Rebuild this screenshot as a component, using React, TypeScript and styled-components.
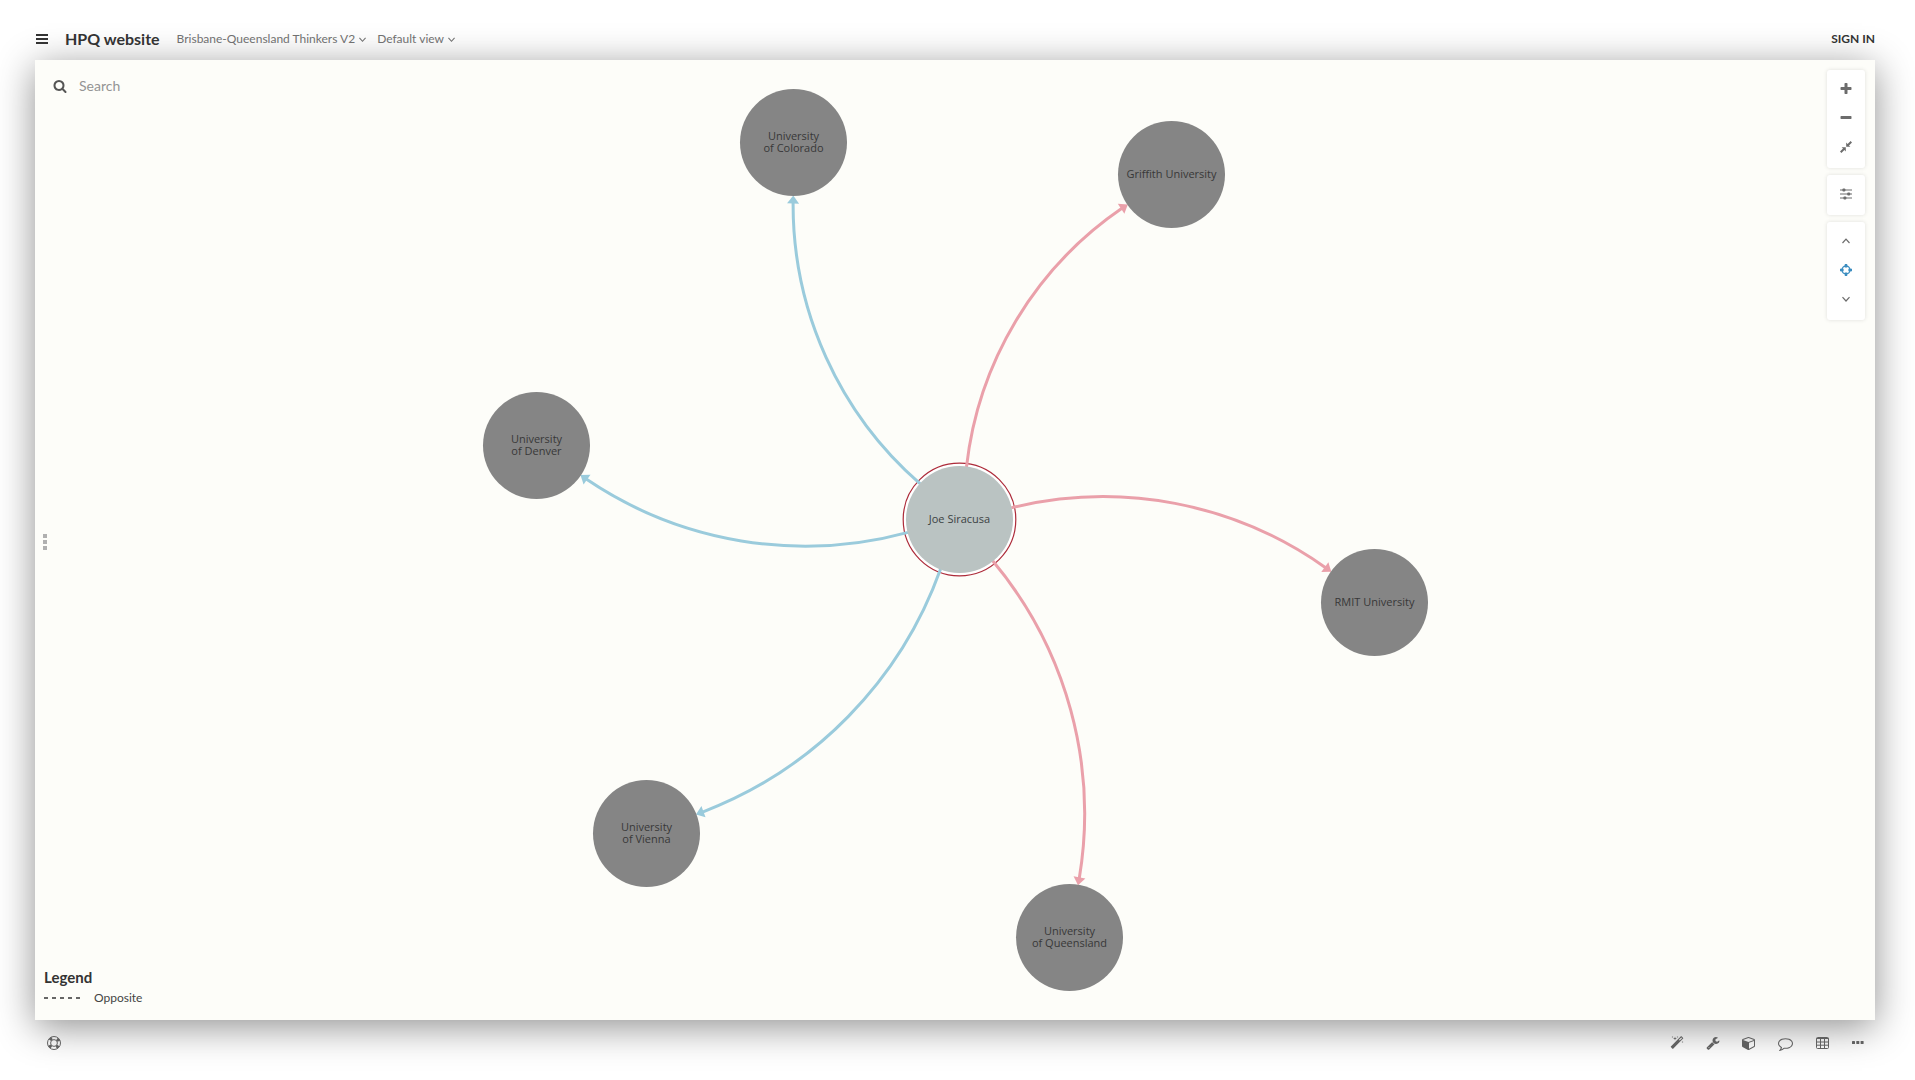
import React from 'react';
import styled, { createGlobalStyle } from 'styled-components';

const GlobalStyle = createGlobalStyle`
  *, *::before, *::after { box-sizing: border-box; }
  body {
    margin: 0;
    background: #fff;
    color: #333;
    font-family: Lato, "Liberation Sans", sans-serif;
  }
  button, input { font: inherit; color: inherit; }
`;

const Page = styled.div`
  display: grid;
  grid-template-rows: 60px 1fr 60px;
  min-height: 100vh;
  padding: 0 40px 0 35px;
`;

const TopBar = styled.header`
  position: relative;
  z-index: 2;
  display: flex;
  align-items: center;
  padding: 18px 0 0 1px;
`;

const PlainButton = styled.button`
  display: inline-flex;
  align-items: center;
  justify-content: center;
  margin: 0;
  padding: 0;
  border: 0;
  background: none;
  cursor: pointer;
`;

const Title = styled.h1`
  margin: 0 17px;
  font-size: 16px;
  line-height: 20px;
  font-weight: 700;
`;

const Picker = styled(PlainButton)`
  gap: 4px;
  margin-right: 11px;
  font-size: 12px;
  line-height: 16px;
  color: #707070;
`;

const SignIn = styled.a`
  margin-left: auto;
  font-size: 12px;
  line-height: 16px;
  font-weight: 700;
  color: #333;
  text-decoration: none;
`;

const MapPanel = styled.main`
  position: relative;
  z-index: 1;
  display: flex;
  flex-direction: column;
  justify-content: space-between;
  background: #fdfdf9;
  box-shadow: 0 7px 36px rgba(0, 0, 0, 0.44);
`;

const SearchBox = styled.label`
  position: relative;
  display: flex;
  align-items: center;
  gap: 12px;
  width: 300px;
  padding: 16px 0 0 18px;
  color: #555;
`;

const SearchInput = styled.input`
  width: 200px;
  height: 20px;
  padding: 0;
  border: 0;
  outline: 0;
  background: transparent;
  font-size: 14px;
  line-height: 20px;
  &::placeholder { color: #949494; opacity: 1; }
`;

const Graph = styled.div`
  position: absolute;
  inset: 0;
  overflow: hidden;
`;

const Edges = styled.svg`
  position: absolute;
  left: 50%;
  top: 50%;
  width: 1px;
  height: 1px;
  overflow: visible;
`;

const Node = styled.button<{ $x: number; $y: number; $selected?: boolean }>`
  position: absolute;
  left: calc(50% + ${(p) => p.$x - 53}px);
  top: calc(50% + ${(p) => p.$y - 53}px);
  display: flex;
  align-items: center;
  justify-content: center;
  width: 107px;
  height: 107px;
  padding: 0 0 1px;
  border: 0;
  border-radius: 50%;
  background: ${(p) => (p.$selected ? '#bac3c2' : '#858585')};
  color: ${(p) => (p.$selected ? '#3c4242' : '#383838')};
  font-family: "Open Sans", "Liberation Sans", sans-serif;
  font-size: 11px;
  line-height: 12px;
  text-align: center;
  white-space: pre-line;
  cursor: pointer;
`;

const Controls = styled.div`
  position: absolute;
  top: 10px;
  right: 10px;
  display: grid;
  gap: 7px;
`;

const ControlGroup = styled.div`
  display: flex;
  flex-direction: column;
  width: 38px;
  padding: 4px 0 7px;
  border-radius: 3px;
  background: #fff;
  box-shadow: 0 0 4px rgba(0, 0, 0, 0.12);
`;

const ControlButton = styled(PlainButton)<{ $active?: boolean }>`
  height: 29px;
  color: ${(p) => (p.$active ? '#3b8dc0' : '#6c6c6c')};
`;

const DragHandle = styled(PlainButton)`
  position: absolute;
  left: 8px;
  top: 50%;
  transform: translateY(-50%);
  flex-direction: column;
  gap: 2px;
  padding-top: 4px;
  span { width: 4px; height: 4px; background: #b0b0b0; }
`;

const Legend = styled.section`
  position: relative;
  padding: 0 0 14px 9px;
`;

const LegendTitle = styled.h2`
  margin: 0 0 4px;
  font-size: 15px;
  line-height: 18px;
  font-weight: 700;
`;

const LegendRow = styled.div`
  display: flex;
  align-items: center;
  gap: 14px;
  font-size: 12px;
  line-height: 16px;
  color: #444;
`;

const BottomBar = styled.footer`
  position: relative;
  z-index: 2;
  display: flex;
  align-items: center;
  justify-content: space-between;
  padding: 0 11px 14px 12px;
`;

const Tools = styled.nav`
  display: flex;
  gap: 22px;
`;

const ToolButton = styled(PlainButton)`
  height: 20px;
  color: #606060;
`;

const glyphs = {
  search:
    'M1216 832q0-185-131.5-316.5t-316.5-131.5-316.5 131.5-131.5 316.5 131.5 316.5 316.5 131.5 316.5-131.5 131.5-316.5zm512 832q0 52-38 90t-90 38q-54 0-90-38l-343-342q-179 124-399 124-143 0-273.5-55.5t-225-150-150-225-55.5-273.5 55.5-273.5 150-225 225-150 273.5-55.5 273.5 55.5 225 150 150 225 55.5 273.5q0 220-124 399l343 343q37 37 37 90z',
  plus: 'M1600 736v192q0 40-28 68t-68 28h-416v416q0 40-28 68t-68 28h-192q-40 0-68-28t-28-68v-416h-416q-40 0-68-28t-28-68v-192q0-40 28-68t68-28h416v-416q0-40 28-68t68-28h192q40 0 68 28t28 68v416h416q40 0 68 28t28 68z',
  minus: 'M1600 736v192q0 40-28 68t-68 28h-1216q-40 0-68-28t-28-68v-192q0-40 28-68t68-28h1216q40 0 68 28t28 68z',
  magic:
    'M1254 581l293-293-107-107-293 293zm447-293q0 27-18 45l-1286 1286q-18 18-45 18t-45-18l-198-198q-18-18-18-45t18-45l1286-1286q18-18 45-18t45 18l198 198q18 18 18 45zm-1351-190l98 30-98 30-30 98-30-98-98-30 98-30 30-98zm350 162l196 60-196 60-60 196-60-196-196-60 196-60 60-196zm930 478l98 30-98 30-30 98-30-98-98-30 98-30 30-98zm-640-640l98 30-98 30-30 98-30-98-98-30 98-30 30-98z',
  wrench:
    'M448 1472q0-26-19-45t-45-19-45 19-19 45 19 45 45 19 45-19 19-45zm644-420l-682 682q-37 37-90 37-52 0-91-37l-106-108q-38-36-38-90 0-53 38-91l681-681q39 98 114.5 173.5t173.5 114.5zm634-435q0 39-23 106-47 134-164.5 217.5t-258.5 83.5q-185 0-316.5-131.5t-131.5-316.5 131.5-316.5 316.5-131.5q58 0 121.5 16.5t107.5 46.5q16 11 16 28t-16 28l-293 169v224l193 107q5-3 79-48.5t135.5-81 70.5-35.5q15 0 23.5 10t8.5 25z',
  cube: 'M896 1629l640-349v-636l-640 233v752zm-64-865l698-254-698-254-698 254zm832-252v768q0 35-18 65t-49 47l-704 384q-28 16-61 16t-61-16l-704-384q-31-17-49-47t-18-65v-768q0-40 23-73t61-47l704-256q22-8 44-8t44 8l704 256q38 14 61 47t23 73z',
  comment:
    'M896 384q-204 0-381.5 69.5t-282 187.5-104.5 255q0 112 71.5 213.5t201.5 175.5l87 50-27 96q-24 91-70 172 152-63 275-171l43-38 57 6q69 8 130 8 204 0 381.5-69.5t282-187.5 104.5-255-104.5-255-282-187.5-381.5-69.5zm896 512q0 174-120 321.5t-326 233-450 85.5q-70 0-145-8-198 175-460 242-49 14-114 22h-5q-15 0-27-10.5t-16-27.5v-1q-3-4-.5-12t2-10 4.5-9.5l6-9 7-8.5 8-9q7-8 31-34.5t34.5-38 31-39.5 32.5-51 27-59 26-76q-157-89-247.5-220t-90.5-281q0-174 120-321.5t326-233 450-85.5 450 85.5 326 233 120 321.5z',
};

const Glyph = ({ name, size = 14 }: { name: keyof typeof glyphs; size?: number }) => (
  <svg width={size} height={size} viewBox="0 0 1792 1792" fill="currentColor" aria-hidden="true">
    <path d={glyphs[name]} />
  </svg>
);

const Chevron = ({ up, size = 7 }: { up?: boolean; size?: number }) => (
  <svg width={size} height={size} viewBox="0 0 8 8" fill="none" stroke="currentColor" strokeWidth="1.2" aria-hidden="true">
    <path d={up ? 'M.5 6L4 2.2 7.5 6' : 'M.5 2.2L4 6 7.5 2.2'} />
  </svg>
);

const BarsIcon = () => (
  <svg width="12" height="12" viewBox="0 0 12 12" fill="currentColor" aria-hidden="true">
    <path d="M0 1h12v2H0zM0 5h12v2H0zM0 9h12v2H0z" />
  </svg>
);

const CompressIcon = () => (
  <svg width="12" height="12" viewBox="0 0 12 12" fill="currentColor" aria-hidden="true">
    <path d="M6.2 1.6v4.2h4.2L9 4.4 12 1.4 10.6 0 7.6 3zM5.8 10.4V6.2H1.6L3 7.6l-3 3L1.4 12l3-3z" />
  </svg>
);

const SlidersIcon = () => (
  <svg width="12" height="12" viewBox="0 0 12 12" fill="currentColor" aria-hidden="true">
    <path d="M0 1.4h12v1.2H0zM0 5.4h12v1.2H0zM0 9.4h12v1.2H0z" />
    <rect x="2.4" y=".5" width="3" height="3" rx="1" />
    <rect x="7.2" y="4.5" width="3" height="3" rx="1" />
    <rect x="3.4" y="8.5" width="3" height="3" rx="1" />
  </svg>
);

const FocusIcon = () => (
  <svg width="12" height="12" viewBox="0 0 12 12" fill="none" stroke="currentColor" aria-hidden="true">
    <circle cx="6" cy="6" r="4" strokeWidth="1.4" />
    <path d="M6 0v3.6M6 8.4V12M0 6h3.6M8.4 6H12" strokeWidth="2.4" />
  </svg>
);

const TableIcon = () => (
  <svg width="15" height="12" viewBox="0 0 15 12" fill="none" stroke="currentColor" aria-hidden="true">
    <rect x="1.5" y=".5" width="12" height="11" rx="1" />
    <path d="M1.5 1.5h12M1.5 5h12M1.5 8.2h12M5.5 2v9.5M9.5 2v9.5" />
  </svg>
);

const EllipsisIcon = () => (
  <svg width="12" height="12" viewBox="0 0 12 12" fill="currentColor" aria-hidden="true">
    <rect x="0" y="4" width="3" height="3" rx=".6" />
    <rect x="4.3" y="4" width="3" height="3" rx=".6" />
    <rect x="8.6" y="4" width="3" height="3" rx=".6" />
  </svg>
);

const LifeRingIcon = () => (
  <svg width="14" height="14" viewBox="0 0 14 14" fill="none" stroke="currentColor" aria-hidden="true">
    <circle cx="7" cy="7" r="6.5" />
    <circle cx="7" cy="7" r="3.4" />
    <circle cx="7" cy="7" r="5" strokeWidth="3" strokeDasharray="2.8 5.05" strokeDashoffset="-2.55" />
  </svg>
);

const BLUE = '#9acbdc';
const PINK = '#eaa0aa';
const RADIUS = 53;
const ARROW = 7;
const SPREAD = (24 * Math.PI) / 180;
const BEND = (25.2 * Math.PI) / 180;

const hub = { label: 'Joe Siracusa', x: 4, y: -21 };

const places = [
  { label: 'University\nof Colorado', x: -162, y: -398, color: BLUE },
  { label: 'Griffith University', x: 216, y: -366, color: PINK },
  { label: 'RMIT University', x: 419, y: 62, color: PINK },
  { label: 'University\nof Queensland', x: 114, y: 397, color: PINK },
  { label: 'University\nof Vienna', x: -309, y: 293, color: BLUE },
  { label: 'University\nof Denver', x: -419, y: -95, color: BLUE },
];

type Place = (typeof places)[number];

const polar = (cx: number, cy: number, distance: number, angle: number) => ({
  x: cx + distance * Math.cos(angle),
  y: cy + distance * Math.sin(angle),
});

/* Each edge is a circular arc from the hub's rim to the rim of the other node. */
const Edge = ({ place }: { place: Place }) => {
  const heading = Math.atan2(place.y - hub.y, place.x - hub.x);
  const start = polar(hub.x, hub.y, RADIUS, heading - SPREAD);
  const tip = polar(place.x, place.y, RADIUS, heading + Math.PI + SPREAD);
  const chord = Math.hypot(tip.x - start.x, tip.y - start.y);
  const arc = chord / (2 * Math.sin(BEND));
  const direction = heading + BEND;
  const end = polar(tip.x, tip.y, -ARROW, direction);
  return (
    <g>
      <path
        d={`M${start.x} ${start.y}A${arc} ${arc} 0 0 1 ${end.x} ${end.y}`}
        fill="none"
        stroke={place.color}
        strokeWidth="3"
      />
      <path
        d="M0 0L-8 -6V6Z"
        fill={place.color}
        transform={`translate(${tip.x} ${tip.y}) rotate(${(direction * 180) / Math.PI})`}
      />
    </g>
  );
};

export default function App() {
  return (
    <>
      <GlobalStyle />
      <Page>
        <TopBar>
          <PlainButton aria-label="Menu"><BarsIcon /></PlainButton>
          <Title>HPQ website</Title>
          <Picker>Brisbane-Queensland Thinkers V2 <Chevron /></Picker>
          <Picker>Default view <Chevron /></Picker>
          <SignIn href="#signin">SIGN IN</SignIn>
        </TopBar>
        <MapPanel>
          <Graph>
            <Edges aria-hidden="true">
              <g transform="translate(.5 .5)">
                <circle cx={hub.x} cy={hub.y} r="56.3" fill="#fff" stroke="#ad2b3a" strokeWidth="1.2" />
                {places.map((p) => <Edge key={p.label} place={p} />)}
              </g>
            </Edges>
            {places.map((p) => <Node key={p.label} $x={p.x} $y={p.y}>{p.label}</Node>)}
            <Node $x={hub.x} $y={hub.y} $selected>{hub.label}</Node>
          </Graph>
          <SearchBox>
            <Glyph name="search" />
            <SearchInput type="text" placeholder="Search" aria-label="Search" />
          </SearchBox>
          <DragHandle aria-label="Resize panel"><span /><span /><span /></DragHandle>
          <Controls>
            <ControlGroup>
              <ControlButton aria-label="Zoom in"><Glyph name="plus" /></ControlButton>
              <ControlButton aria-label="Zoom out"><Glyph name="minus" /></ControlButton>
              <ControlButton aria-label="Zoom to fit"><CompressIcon /></ControlButton>
            </ControlGroup>
            <ControlGroup>
              <ControlButton aria-label="Settings"><SlidersIcon /></ControlButton>
            </ControlGroup>
            <ControlGroup>
              <ControlButton aria-label="Expand focus"><Chevron up size={8} /></ControlButton>
              <ControlButton aria-label="Focus" $active><FocusIcon /></ControlButton>
              <ControlButton aria-label="Reduce focus"><Chevron size={8} /></ControlButton>
            </ControlGroup>
          </Controls>
          <Legend>
            <LegendTitle>Legend</LegendTitle>
            <LegendRow>
              <svg width="36" height="2" aria-hidden="true">
                <path d="M0 1H36" stroke="#666" strokeWidth="2" strokeDasharray="4 4" />
              </svg>
              Opposite
            </LegendRow>
          </Legend>
        </MapPanel>
        <BottomBar>
          <ToolButton aria-label="Help"><LifeRingIcon /></ToolButton>
          <Tools aria-label="Tools">
            <ToolButton aria-label="Decorate"><Glyph name="magic" /></ToolButton>
            <ToolButton aria-label="Build"><Glyph name="wrench" /></ToolButton>
            <ToolButton aria-label="Blocks"><Glyph name="cube" /></ToolButton>
            <ToolButton aria-label="Comments"><Glyph name="comment" size={15} /></ToolButton>
            <ToolButton aria-label="Table"><TableIcon /></ToolButton>
            <ToolButton aria-label="More"><EllipsisIcon /></ToolButton>
          </Tools>
        </BottomBar>
      </Page>
    </>
  );
}
